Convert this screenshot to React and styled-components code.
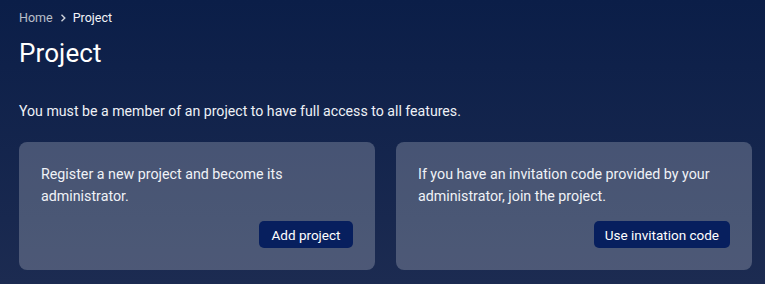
import React from 'react';
import styled, { createGlobalStyle } from 'styled-components';

const GlobalStyle = createGlobalStyle`
  html, body {
    margin: 0;
    padding: 0;
  }
  body {
    font-family: Roboto, "Liberation Sans", sans-serif;
    background: #0c1f48;
  }
`

const Page = styled.div`
  min-height: 284px;
  box-sizing: border-box;
  padding: 9px 13px 14px 19px;
  background: linear-gradient(180deg, #0b1e48 0%, #1c2b51 100%);
  color: #ffffff;
`

const Breadcrumb = styled.nav`
  display: flex;
  align-items: center;
  gap: 5px;
  font-size: 12.5px;
  line-height: 18px;

  span{
    color: rgba(255, 255, 255, .72);
  }
  strong{
    font-weight: 400;
    color: #f2f4f8;
  }
`

const Title = styled.h1`
  margin: 9px 0 0;
  font-size: 26px;
  font-weight: 400;
  line-height: 34px;
  letter-spacing: 0.1px;
`

const Lead = styled.p`
  margin: 31px 0 0;
  font-size: 14.15px;
  line-height: 20px;
  color: #eef1f6;
`

const CardGrid = styled.div`
  display: grid;
  grid-template-columns: 1fr 1fr;
  gap: 21px;
  margin-top: 21px;
`

const Card = styled.div`
  background: rgba(255, 255, 255, .22);
  border-radius: 8px;
  height: 128px;
  box-sizing: border-box;
  padding: 21px 22px 22px;
  display: flex;
  flex-direction: column;
  justify-content: space-between;

  p{
    margin: 0;
    font-size: 14.25px;
    line-height: 22px;
    color: #f0f2f7;
  }
`

const Actions = styled.div`
  display: flex;
  justify-content: flex-end;
`

const Button = styled.button`
  font-family: inherit;
  font-size: 13.5px;
  font-weight: 400;
  color: #ffffff;
  background: #071f5e;
  border: none;
  border-radius: 5px;
  height: 27px;
  padding: 0 ${p => p.$wide ? '11px' : '12.5px'};
  cursor: pointer;
`

const Chevron = () => (
  <svg width="10" height="10" viewBox="0 0 10 10" fill="none">
    <path d="M3.5 1.8 L6.8 5 L3.5 8.2" stroke="rgba(255,255,255,.8)" strokeWidth="1.4" />
  </svg>
)

const App = () => {
  return (
    <Page>
      <GlobalStyle />
      <Breadcrumb>
        <span>Home</span>
        <Chevron />
        <strong>Project</strong>
      </Breadcrumb>
      <Title>Project</Title>
      <Lead>You must be a member of an project to have full access to all features.</Lead>
      <CardGrid>
        <Card>
          <p>Register a new project and become its administrator.</p>
          <Actions>
            <Button>Add project</Button>
          </Actions>
        </Card>
        <Card>
          <p>If you have an invitation code provided by your administrator, join the project.</p>
          <Actions>
            <Button $wide>Use invitation code</Button>
          </Actions>
        </Card>
      </CardGrid>
    </Page>
  )
}

export default App
